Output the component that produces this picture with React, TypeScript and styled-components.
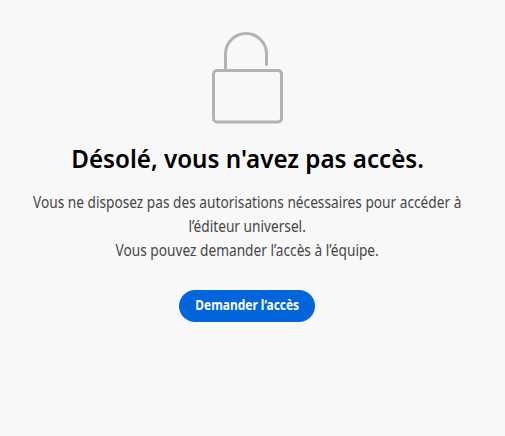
import React from "react";
import styled, { createGlobalStyle } from "styled-components";

const GlobalStyle = createGlobalStyle`
  * { box-sizing: border-box; }
  body {
    margin: 0;
    background: #f8f8f8;
    font-family: "Noto Sans", "Open Sans", sans-serif;
  }
`;

const Page = styled.main`
  width: 494px;
  height: 436px;
  padding-top: 31px;
  display: flex;
  flex-direction: column;
  align-items: center;
  overflow: hidden;
`;

const LockIcon = styled.svg`
  display: block;
  width: 72px;
  height: 93px;
  flex: none;
  fill: none;
  stroke: #b3b3b3;
  stroke-width: 3;
`;

const Title = styled.h1`
  margin: 18px 0 0;
  font-size: 26px;
  font-weight: 600;
  line-height: 32px;
  color: #000;
  white-space: nowrap;
  transform: translateX(1px) scaleX(0.93);
`;

const Message = styled.p`
  margin: 16px 0 0;
  font-size: 15.5px;
  line-height: 24px;
  color: #464646;
  text-align: center;
  transform: translateX(0.6px) scaleX(0.883);
`;

const Line = styled.span`
  display: block;
  white-space: nowrap;
`;

const RequestButton = styled.button`
  width: 136px;
  height: 32px;
  flex: none;
  margin-top: 28px;
  padding: 0 0 2px;
  display: flex;
  align-items: center;
  justify-content: center;
  border: 0;
  border-radius: 16px;
  background: #0265dc;
  color: #fff;
  font: 700 13.5px/20px "Noto Sans", "Open Sans", sans-serif;
`;

const ButtonLabel = styled.span`
  white-space: nowrap;
  transform: translateX(0.5px) scaleX(0.885);
`;

export default function App() {
  return (
    <>
      <GlobalStyle />
      <Page>
        <LockIcon viewBox="0 0 72 93" aria-hidden="true">
          <rect x="2.5" y="39.5" width="68" height="51.5" rx="3.5" />
          <path d="M14.5 39V23a20.5 20.5 0 0 1 41 0V33.5" strokeLinecap="round" />
        </LockIcon>
        <Title>Désolé, vous n'avez pas accès.</Title>
        <Message>
          <Line>Vous ne disposez pas des autorisations nécessaires pour accéder à</Line>
          <Line>l’éditeur universel.</Line>
          <Line>Vous pouvez demander l’accès à l’équipe.</Line>
        </Message>
        <RequestButton type="button">
          <ButtonLabel>Demander l’accès</ButtonLabel>
        </RequestButton>
      </Page>
    </>
  );
}
